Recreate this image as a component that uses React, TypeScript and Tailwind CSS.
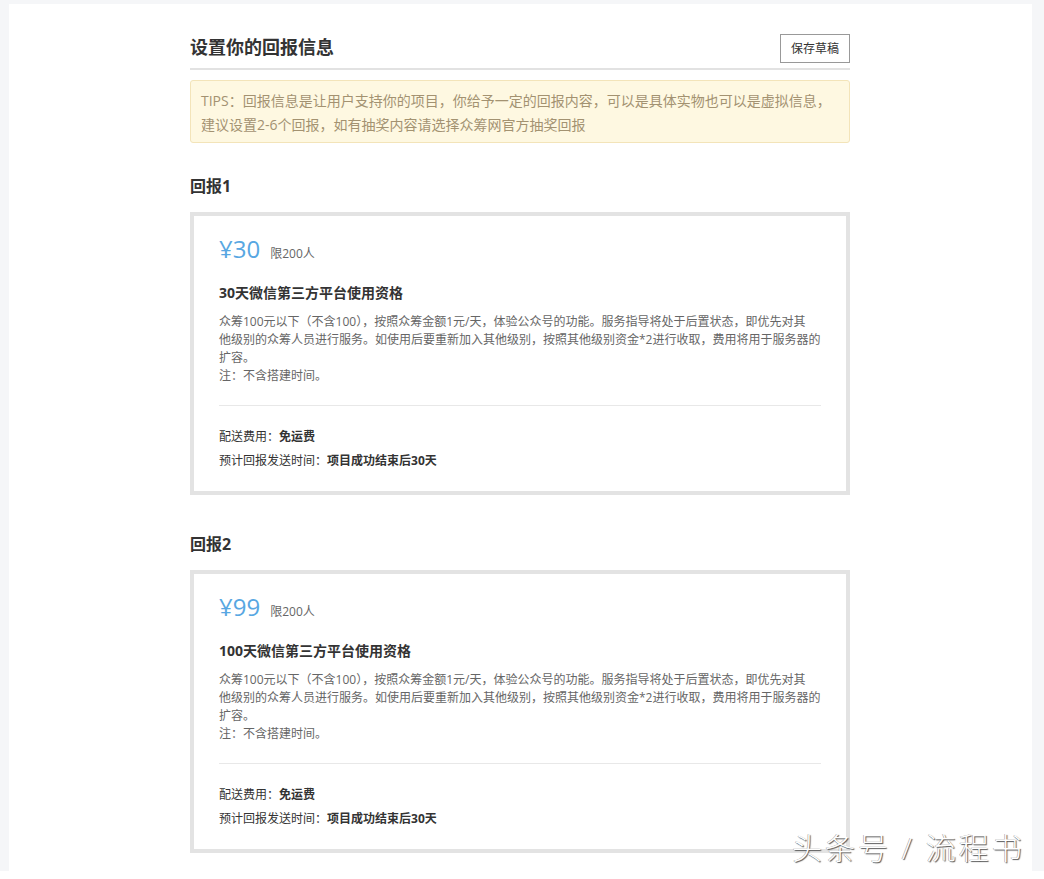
import React from 'react';

const rewards = [
    { name: '回报1', price: '¥30', limit: '限200人', title: '30天微信第三方平台使用资格' },
    { name: '回报2', price: '¥99', limit: '限200人', title: '100天微信第三方平台使用资格' },
];

const descLines = [
    '众筹100元以下（不含100），按照众筹金额1元/天，体验公众号的功能。服务指导将处于后置状态，即优先对其',
    '他级别的众筹人员进行服务。如使用后要重新加入其他级别，按照其他级别资金*2进行收取，费用将用于服务器的',
    '扩容。',
    '注：不含搭建时间。',
];

function RewardCard({ r, first }: { r: typeof rewards[number]; first: boolean }) {
    return (
        <div className={first ? 'mt-[31px]' : 'mt-[37px]'}>
            <h3 className="text-[16px] leading-[24px] font-bold text-[#333]">{r.name}</h3>
            <div className="mt-[14px] border-4 border-[#e3e3e3] px-[25px] pt-[17px] pb-[18px]">
                <div className="flex items-baseline gap-[10px] h-[32px]">
                    <span className="text-[24px] leading-[32px] text-[#58a7e2]">{r.price}</span>
                    <span className="text-[12px] text-[#666]">{r.limit}</span>
                </div>
                <div className="mt-[18px] text-[14px] leading-[20px] font-bold text-[#333]">{r.title}</div>
                <div className="mt-[10px] text-[12px] leading-[18px] text-[#666]">
                    {descLines.map((l, i) => (
                        <div key={i} className="whitespace-nowrap">{l}</div>
                    ))}
                </div>
                <div className="mt-[20px] h-px bg-[#e8e8e8]" />
                <div className="mt-[19px] text-[12px] leading-[24px] text-[#333]">
                    <div>配送费用：<b>免运费</b></div>
                    <div>预计回报发送时间：<b>项目成功结束后30天</b></div>
                </div>
            </div>
        </div>
    );
}

export default function App() {
    return (
        <div
            className="relative h-[879px] w-[1044px] bg-white overflow-hidden"
            style={{ fontFamily: '"Open Sans", "Noto Sans CJK SC", sans-serif' }}
        >
            <div className="h-[871px] bg-[#f5f6f8] pt-[4px] pl-[9px] pr-[12px]">
                <div className="h-full bg-white pl-[181px]">
                    <div className="w-[660px] pt-[30px]">
                        {/* header */}
                        <div className="flex items-end justify-between border-b-2 border-[#e2e2e2] pb-[5px]">
                            <h1 className="text-[18px] leading-[26px] font-bold text-[#333] mb-[3px]">设置你的回报信息</h1>
                            <button className="h-[29px] w-[70px] border border-[#999] text-[12px] text-[#333] bg-white">保存草稿</button>
                        </div>

                        <div className="mt-[10px] rounded-[3px] border border-[#f3e4b9] bg-[#fef8e1] pl-[10px] pt-[8px] pb-[5px] text-[14px] leading-[24px] text-[#a39271]">
                            <div>TIPS：回报信息是让用户支持你的项目，你给予一定的回报内容，可以是具体实物也可以是虚拟信息，</div>
                            <div>建议设置2-6个回报，如有抽奖内容请选择众筹网官方抽奖回报</div>
                        </div>

                        {rewards.map((r, i) => (
                            <RewardCard key={r.name} r={r} first={i === 0} />
                        ))}
                    </div>
                </div>
            </div>

            {/* watermark */}
            <div
                className="absolute left-[792px] top-[828px] text-[30px] leading-[40px] font-light text-white tracking-[3px]"
                style={{ textShadow: '1px 1px 1px #555, -0.5px -0.5px 0 #999' }}
            >
                头条号 / 流程书
            </div>
        </div>
    );
}
